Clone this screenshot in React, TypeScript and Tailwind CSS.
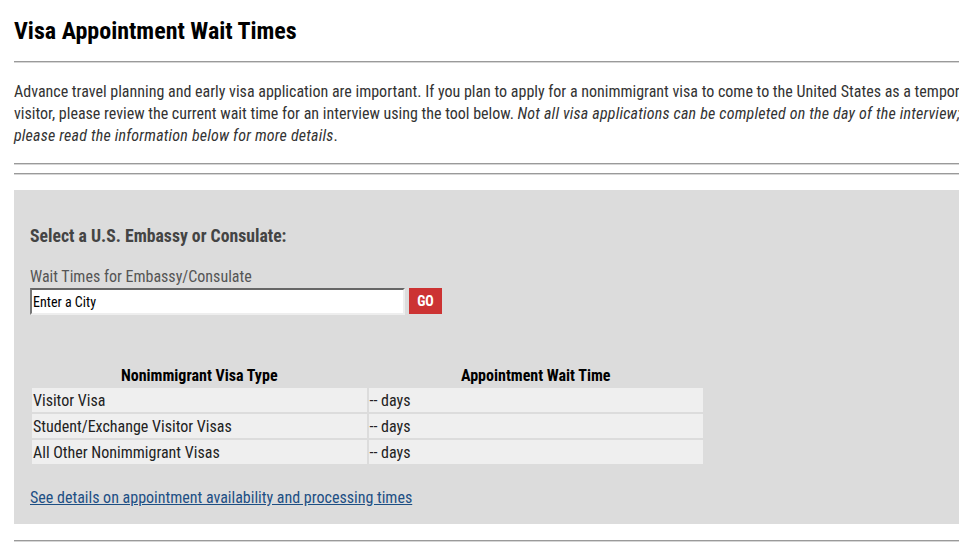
import { useState } from "react";

const rows = [
  { type: "Visitor Visa", wait: "-- days" },
  { type: "Student/Exchange Visitor Visas", wait: "-- days" },
  { type: "All Other Nonimmigrant Visas", wait: "-- days" },
];

function Rule({ className = "" }: { className?: string }) {
  return <div className={`h-[2px] border-t border-t-[#9a9a9a] border-b border-b-[#d6d6d6] ${className}`} />;
}

export default function App() {
  const [city, setCity] = useState("");

  return (
    <div className="min-h-screen w-full overflow-hidden bg-white font-['Roboto_Condensed','Liberation_Sans_Narrow',Roboto,sans-serif] font-stretch-condensed">
      <div className="w-[1010px] pl-[14px]">
        {/* title */}
        <h1 className="pt-[18px] pb-[17px] text-[24px] leading-[26px] font-bold text-black">
          Visa Appointment Wait Times
        </h1>
        <Rule />

        {/* intro */}
        <p className="pt-[18px] pb-[16px] text-[16px] leading-[22px] text-[#333] whitespace-nowrap">
          Advance travel planning and early visa application are important. If you plan to apply for a nonimmigrant visa to come to the United States as a temporary
          <br />
          visitor, please review the current wait time for an interview using the tool below.{" "}
          <em className="tracking-[0.2px]">Not all visa applications can be completed on the day of the interview;</em>
          <br />
          <em className="tracking-[0.2px]">please read the information below for more details</em>.
        </p>
        <Rule />
        <Rule className="mt-[8px]" />

        {/* wait time tool */}
        <div className="mt-[15px] bg-[#dcdcdc] px-[16px] pt-[34px] pb-[14px]">
          <h2 className="text-[17.7px] leading-[24px] font-bold text-[#444]">
            Select a U.S. Embassy or Consulate:
          </h2>

          <label className="mt-[19px] block text-[16px] leading-[20px] text-[#555]">
            Wait Times for Embassy/Consulate
          </label>
          <div className="mt-[1px] flex items-start gap-[4px]">
            <input
              value={city}
              onChange={(e) => setCity(e.target.value)}
              placeholder="Enter a City"
              className="h-[27px] w-[375px] border-2 border-t-[#666] border-l-[#777] border-b-[#eee] border-r-[#eee] bg-white px-[1px] text-[14px] text-black placeholder:text-black outline-none"
            />
            <button
              type="button"
              className="h-[26px] w-[33px] bg-[#cc3333] text-[14px] font-bold text-white"
            >
              GO
            </button>
          </div>

          <table className="mt-[48px] w-[675px] border-separate border-spacing-[2px] text-[16px]">
            <thead>
              <tr>
                <th className="h-[21px] leading-[21px] font-bold text-[16px] text-black">Nonimmigrant Visa Type</th>
                <th className="h-[21px] leading-[21px] font-bold text-[16px] text-black">Appointment Wait Time</th>
              </tr>
            </thead>
            <tbody>
              {rows.map((r) => (
                <tr key={r.type}>
                  <td className="w-1/2 bg-[#efefef] pt-[2px] pl-[1px] leading-[22px] text-[#222]">{r.type}</td>
                  <td className="w-1/2 bg-[#efefef] pt-[2px] pl-[1px] leading-[22px] text-[#222]">{r.wait}</td>
                </tr>
              ))}
            </tbody>
          </table>

          <a
            href="#"
            className="mt-[21px] inline-block text-[16px] leading-[22px] text-[#1d4f84] underline"
          >
            See details on appointment availability and processing times
          </a>
        </div>

        <Rule className="mt-[16px]" />
      </div>
    </div>
  );
}
